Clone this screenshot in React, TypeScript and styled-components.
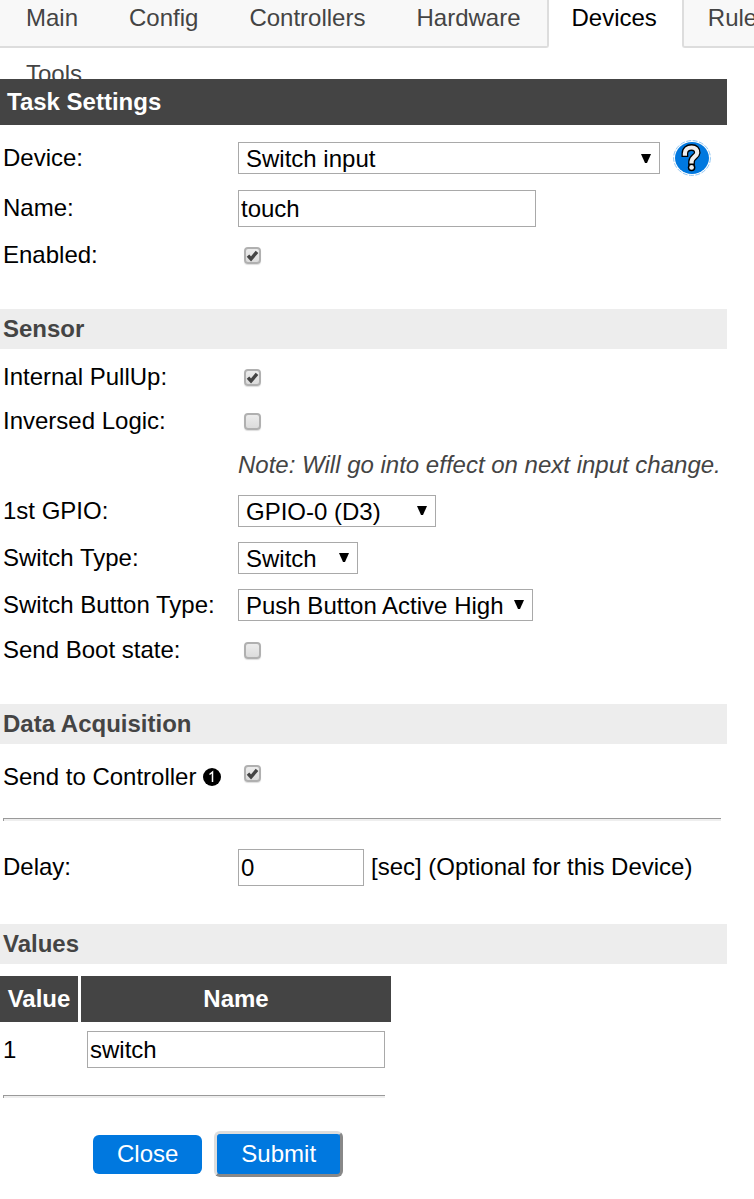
import React from "react";
import styled, { createGlobalStyle } from "styled-components";

const GlobalStyle = createGlobalStyle`
  *, *::before, *::after { box-sizing: border-box; }
  body {
    margin: 0;
    background: #fff;
    color: #000;
    font: 24px/28px "Liberation Sans", Arial, sans-serif;
    overflow-x: hidden;
  }
  input, select, button { font: inherit; color: inherit; }
`;

const Nav = styled.nav`
  height: 79px;
  overflow: hidden;
`;

const TabRow = styled.div`
  display: flex;
  padding-bottom: 8px;
`;

type TabKind = "normal" | "beforeActive" | "active" | "afterActive" | "plain";

const tabPadding: Record<TabKind, string> = {
  normal: "4px 25px 0 26px",
  beforeActive: "4px 26px 0 26px",
  active: "4px 25px 0 23px",
  afterActive: "4px 25px 0 24px",
  plain: "4px 25px 0 26px",
};

const Tab = styled.a<{ $kind: TabKind }>`
  flex: none;
  height: 48px;
  padding: ${(p) => tabPadding[p.$kind]};
  border: 0 solid #ddd;
  border-bottom-width: ${(p) => (p.$kind === "active" || p.$kind === "plain" ? "0" : "2px")};
  border-left-width: ${(p) => (p.$kind === "afterActive" ? "2px" : "0")};
  border-right-width: ${(p) => (p.$kind === "beforeActive" ? "2px" : "0")};
  border-bottom-left-radius: ${(p) => (p.$kind === "afterActive" ? "3px" : "0")};
  border-bottom-right-radius: ${(p) => (p.$kind === "beforeActive" ? "3px" : "0")};
  background: ${(p) => (p.$kind === "active" || p.$kind === "plain" ? "#fff" : "#f8f8f8")};
  color: ${(p) => (p.$kind === "active" ? "#000" : "#444")};
  text-decoration: none;
`;

const Form = styled.form`
  margin-right: 27px;
`;

const PageTitle = styled.h1`
  margin: 0;
  padding: 9px 7px;
  background: #444;
  color: #fff;
  font-size: 24px;
  line-height: 28px;
`;

const SectionTitle = styled.h2`
  margin: 0;
  padding: 6px 3px;
  background: #ededed;
  color: #444;
  font-size: 24px;
  line-height: 28px;
`;

const Section = styled.section`
  padding: 6px 0 32px;
  ${PageTitle} + & { padding-top: 8px; }
`;

const Row = styled.div<{ $size?: "tall" | "medium" }>`
  display: grid;
  grid-template-columns: 235px 1fr;
  align-items: center;
  padding-left: 3px;
  min-height: ${(p) =>
    p.$size === "tall" ? "50px" : p.$size === "medium" ? "47px" : "44px"};
`;

const BadgeLabel = styled.label`
  padding-top: 6px;
`;

const Field = styled.div`
  display: flex;
  align-items: center;
  white-space: nowrap;
`;

const Note = styled.em`
  grid-column: 2;
  color: #444;
  white-space: nowrap;
`;

const TextInput = styled.input<{ $short?: boolean }>`
  display: block;
  width: ${(p) => (p.$short ? "126px" : "298px")};
  height: 37px;
  margin-right: 7px;
  padding: 1px 2px 0;
  border: 1px solid #a9a9a9;
  background: #fff;
`;

const CheckWrap = styled.span`
  display: grid;
  margin-left: 6px;
  > * { grid-area: 1 / 1; }
  svg { pointer-events: none; }
`;

const CheckInput = styled.input`
  appearance: none;
  width: 17px;
  height: 17px;
  margin: 0;
  border: 2px solid #b0b0b0;
  border-radius: 4px;
  background: linear-gradient(#ececec, #dcdcdc);
  box-shadow: 0 1px 1px #ddd;
  & + svg { visibility: hidden; }
  &:checked + svg { visibility: visible; }
`;

const SelectWrap = styled.span<{ $width: number }>`
  display: grid;
  width: ${(p) => p.$width}px;
  align-items: center;
  > * { grid-area: 1 / 1; }
  svg {
    justify-self: end;
    margin-right: 9px;
    pointer-events: none;
  }
`;

const SelectInput = styled.select`
  appearance: none;
  width: 100%;
  height: 32px;
  padding: 2px 7px 0;
  border: 1px solid #a9a9a9;
  border-radius: 0;
  background: #fff;
`;

const HelpButton = styled.button`
  display: block;
  margin-left: 13px;
  padding: 0;
  border: 0;
  background: none;
  svg { display: block; }
`;

const Badge = styled.svg`
  margin-left: 7px;
  vertical-align: -1px;
`;

const Rule = styled.hr`
  margin: 21px 6px 21px 3px;
  height: 3px;
  border: 0;
  border-top: 1px solid #9a9a9a;
  border-left: 1px solid #9a9a9a;
  background: #eee;
`;

const ValuesBlock = styled.div`
  width: 391px;
  padding-top: 12px;
`;

const ValuesTable = styled.table`
  width: 100%;
  border-collapse: separate;
  border-spacing: 0;
  table-layout: fixed;
  th {
    height: 46px;
    padding: 0;
    background: #444;
    color: #fff;
  }
  th:first-child {
    width: 81px;
    padding-right: 3px;
    background: linear-gradient(to left, #fff 3px, #444 3px);
  }
  td { padding: 9px 3px 6px; }
  td:last-child { padding: 9px 0 6px 6px; }
`;

const Actions = styled.div`
  display: flex;
  align-items: center;
  gap: 12px;
  padding: 12px 0 20px 93px;
`;

const ActionButton = styled.button<{ $primary?: boolean }>`
  padding: ${(p) => (p.$primary ? "6px 24px" : "5px 24px 6px")};
  border: ${(p) => (p.$primary ? "3px solid" : "0")};
  border-color: #ddd #888 #888 #ddd;
  border-radius: 6px;
  background: #0078df;
  color: #fff;
`;

function Check({ id, checked }: { id: string; checked?: boolean }) {
  return (
    <CheckWrap>
      <CheckInput id={id} type="checkbox" defaultChecked={checked} />
      <svg width="17" height="17" viewBox="0 0 17 17" aria-hidden="true">
        <path d="M4 8.7 7 12 13 4.8" fill="none" stroke="#444" strokeWidth="3.4" />
      </svg>
    </CheckWrap>
  );
}

function Dropdown({ id, value, width }: { id: string; value: string; width: number }) {
  return (
    <SelectWrap $width={width}>
      <SelectInput id={id}>
        <option>{value}</option>
      </SelectInput>
      <svg width="10" height="9" viewBox="0 0 10 9" aria-hidden="true">
        <path d="M0 0H10L6 9H4Z" />
      </svg>
    </SelectWrap>
  );
}

function HelpIcon() {
  const mark = "M11.9 13.6C11.9 9.8 14.6 7.5 18.6 7.5C22.4 7.5 24.4 9.7 24.2 12.9C24 16.4 18.8 17.1 18.6 21.4";
  return (
    <svg width="38" height="36" viewBox="0 0 38 36" aria-hidden="true">
      <ellipse cx="19" cy="18" rx="18.4" ry="17.4" fill="#fff" stroke="#8fc5f2" strokeDasharray="5 1.5" />
      <ellipse cx="19" cy="18" rx="17" ry="16" fill="#0078df" />
      <path d={mark} fill="none" stroke="#000" strokeWidth="6.8" strokeLinecap="square" />
      <circle cx="18.6" cy="27.4" r="3.8" />
      <path d={mark} fill="none" stroke="#eee" strokeWidth="4.2" strokeLinecap="square" />
      <circle cx="18.6" cy="27.4" r="2.3" fill="#eee" />
    </svg>
  );
}

export default function App() {
  return (
    <>
      <GlobalStyle />
      <Nav>
        <TabRow>
          <Tab href="#main" $kind="normal">Main</Tab>
          <Tab href="#config" $kind="normal">Config</Tab>
          <Tab href="#controllers" $kind="normal">Controllers</Tab>
          <Tab href="#hardware" $kind="beforeActive">Hardware</Tab>
          <Tab href="#devices" $kind="active">Devices</Tab>
          <Tab href="#rules" $kind="afterActive">Rules</Tab>
        </TabRow>
        <TabRow>
          <Tab href="#tools" $kind="plain">Tools</Tab>
        </TabRow>
      </Nav>
      <Form onSubmit={(e) => e.preventDefault()}>
        <PageTitle>Task Settings</PageTitle>
        <Section>
          <Row $size="tall">
            <label htmlFor="device">Device:</label>
            <Field>
              <Dropdown id="device" value="Switch input" width={422} />
              <HelpButton type="button" aria-label="Help"><HelpIcon /></HelpButton>
            </Field>
          </Row>
          <Row $size="tall">
            <label htmlFor="name">Name:</label>
            <Field><TextInput id="name" defaultValue="touch" /></Field>
          </Row>
          <Row>
            <label htmlFor="enabled">Enabled:</label>
            <Field><Check id="enabled" checked /></Field>
          </Row>
        </Section>

        <SectionTitle>Sensor</SectionTitle>
        <Section>
          <Row>
            <label htmlFor="pullup">Internal PullUp:</label>
            <Field><Check id="pullup" checked /></Field>
          </Row>
          <Row>
            <label htmlFor="inversed">Inversed Logic:</label>
            <Field><Check id="inversed" /></Field>
          </Row>
          <Row><Note>Note: Will go into effect on next input change.</Note></Row>
          <Row $size="medium">
            <label htmlFor="gpio">1st GPIO:</label>
            <Field><Dropdown id="gpio" value="GPIO-0 (D3)" width={198} /></Field>
          </Row>
          <Row $size="medium">
            <label htmlFor="type">Switch Type:</label>
            <Field><Dropdown id="type" value="Switch" width={120} /></Field>
          </Row>
          <Row $size="medium">
            <label htmlFor="button">Switch Button Type:</label>
            <Field><Dropdown id="button" value="Push Button Active High" width={295} /></Field>
          </Row>
          <Row>
            <label htmlFor="boot">Send Boot state:</label>
            <Field><Check id="boot" /></Field>
          </Row>
        </Section>

        <SectionTitle>Data Acquisition</SectionTitle>
        <Section>
          <Row $size="medium">
            <BadgeLabel htmlFor="send">
              Send to Controller
              <Badge width="18" height="18" viewBox="0 0 18 18" aria-label="1">
                <circle cx="9" cy="9" r="9" />
                <path d="M6.5 6.5 9.5 4V14" fill="none" stroke="#fff" strokeWidth="1.5" />
              </Badge>
            </BadgeLabel>
            <Field><Check id="send" checked /></Field>
          </Row>
          <Rule />
          <Row $size="tall">
            <label htmlFor="delay">Delay:</label>
            <Field>
              <TextInput id="delay" $short defaultValue="0" />
              <span>[sec] (Optional for this Device)</span>
            </Field>
          </Row>
        </Section>

        <SectionTitle>Values</SectionTitle>
        <ValuesBlock>
          <ValuesTable>
            <thead>
              <tr><th>Value</th><th>Name</th></tr>
            </thead>
            <tbody>
              <tr>
                <td>1</td>
                <td><TextInput aria-label="Value name" defaultValue="switch" /></td>
              </tr>
            </tbody>
          </ValuesTable>
          <Rule />
          <Actions>
            <ActionButton type="button">Close</ActionButton>
            <ActionButton type="submit" $primary>Submit</ActionButton>
          </Actions>
        </ValuesBlock>
      </Form>
    </>
  );
}
